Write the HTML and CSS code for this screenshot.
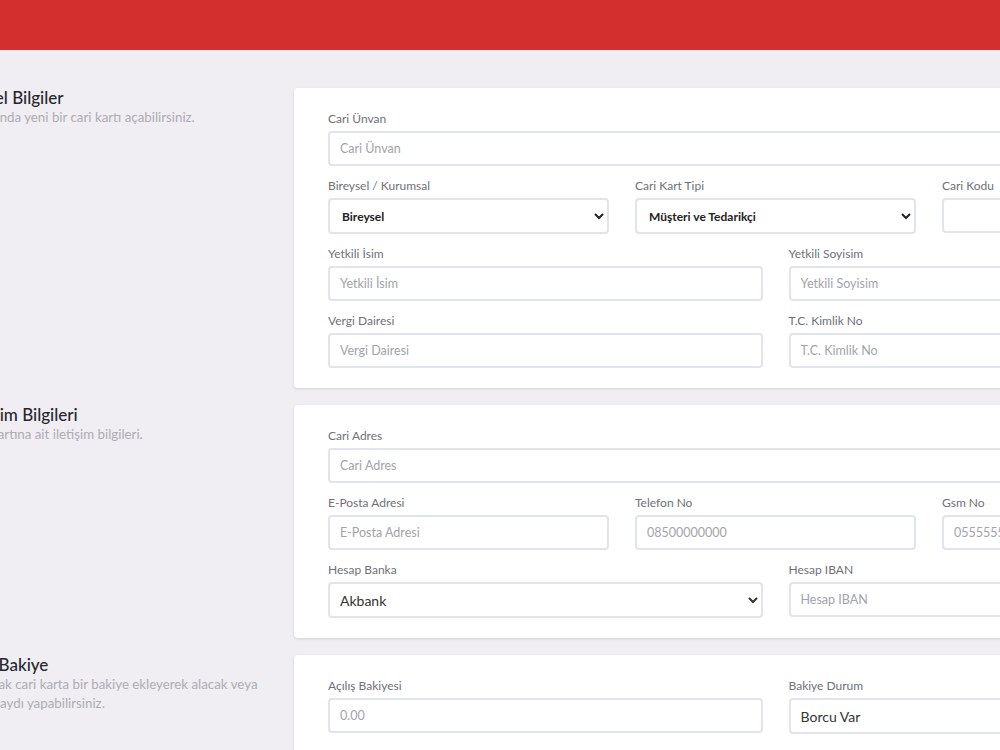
FILE: index.html
```html
<!DOCTYPE html>
<html lang="tr">
<head>
    <meta charset="UTF-8">
    <meta name="viewport" content="width=device-width, initial-scale=1.0">
    <title>Cari Kart Oluştur</title>
    <link rel="stylesheet" href="styles.css">
</head>
<body>
    <header class="topbar"></header>

    <main class="page">
        <section class="section">
            <div class="section-info">
                <h3>Genel Bilgiler</h3>
                <p>Bu alanda yeni bir cari kartı açabilirsiniz.</p>
            </div>
            <div class="card">
                <div class="row">
                    <div class="field">
                        <label>Cari Ünvan</label>
                        <input type="text" placeholder="Cari Ünvan">
                    </div>
                </div>
                <div class="row cols-3">
                    <div class="field">
                        <label>Bireysel / Kurumsal</label>
                        <select class="select-bold">
                            <option>Bireysel</option>
                            <option>Kurumsal</option>
                        </select>
                    </div>
                    <div class="field">
                        <label>Cari Kart Tipi</label>
                        <select class="select-bold">
                            <option>Müşteri ve Tedarikçi</option>
                            <option>Müşteri</option>
                            <option>Tedarikçi</option>
                        </select>
                    </div>
                    <div class="field">
                        <label>Cari Kodu</label>
                        <input type="text">
                    </div>
                </div>
                <div class="row cols-2">
                    <div class="field">
                        <label>Yetkili İsim</label>
                        <input type="text" placeholder="Yetkili İsim">
                    </div>
                    <div class="field">
                        <label>Yetkili Soyisim</label>
                        <input type="text" placeholder="Yetkili Soyisim">
                    </div>
                </div>
                <div class="row cols-2">
                    <div class="field">
                        <label>Vergi Dairesi</label>
                        <input type="text" placeholder="Vergi Dairesi">
                    </div>
                    <div class="field">
                        <label>T.C. Kimlik No</label>
                        <input type="text" placeholder="T.C. Kimlik No">
                    </div>
                </div>
            </div>
        </section>

        <section class="section">
            <div class="section-info">
                <h3>İletişim Bilgileri</h3>
                <p>Cari kartına ait iletişim bilgileri.</p>
            </div>
            <div class="card">
                <div class="row">
                    <div class="field">
                        <label>Cari Adres</label>
                        <input type="text" placeholder="Cari Adres">
                    </div>
                </div>
                <div class="row cols-3">
                    <div class="field">
                        <label>E-Posta Adresi</label>
                        <input type="email" placeholder="E-Posta Adresi">
                    </div>
                    <div class="field">
                        <label>Telefon No</label>
                        <input type="text" placeholder="08500000000">
                    </div>
                    <div class="field">
                        <label>Gsm No</label>
                        <input type="text" placeholder="05555555555">
                    </div>
                </div>
                <div class="row cols-2">
                    <div class="field">
                        <label>Hesap Banka</label>
                        <select class="select-plain">
                            <option>Akbank</option>
                            <option>Garanti BBVA</option>
                            <option>Ziraat Bankası</option>
                        </select>
                    </div>
                    <div class="field">
                        <label>Hesap IBAN</label>
                        <input type="text" placeholder="Hesap IBAN">
                    </div>
                </div>
            </div>
        </section>

        <section class="section">
            <div class="section-info">
                <h3>Cari Bakiye</h3>
                <p>Açılacak cari karta bir bakiye ekleyerek alacak veya borç kaydı yapabilirsiniz.</p>
            </div>
            <div class="card">
                <div class="row cols-2">
                    <div class="field">
                        <label>Açılış Bakiyesi</label>
                        <input type="text" placeholder="0.00">
                    </div>
                    <div class="field">
                        <label>Bakiye Durum</label>
                        <select class="select-plain">
                            <option>Borcu Var</option>
                            <option>Alacağı Var</option>
                        </select>
                    </div>
                </div>
            </div>
        </section>
    </main>
</body>
</html>
```

FILE: styles.css
```css
* { margin: 0; padding: 0; box-sizing: border-box; font-family: 'Lato', 'Noto Sans', sans-serif; }
body { background: #f0eef3; color: #2b2b33; overflow: hidden; }

.topbar {
    height: 50px;
    background: #d32f2f;
}

.page {
    width: 1300px;
    margin-left: -36px;
    padding-top: 38px;
}

.section {
    display: grid;
    grid-template-columns: 330px 963px;
    margin-bottom: 17px;
}

.section-info { padding-right: 30px; }

.section-info h3 {
    font-size: 17px;
    font-weight: 500;
    color: #26262e;
    line-height: 20px;
}

.section-info p {
    font-size: 13.3px;
    line-height: 19px;
    color: #aeacb3;
}

.card {
    background: #fff;
    border-radius: 4px;
    box-shadow: 0 1px 3px rgba(0, 0, 0, 0.13);
    padding: 23px 34px 20px;
    display: flex;
    flex-direction: column;
    gap: 12px;
}

.row { display: grid; gap: 26px; }
.row.cols-2 { grid-template-columns: 1fr 1fr; }
.row.cols-3 { grid-template-columns: 1fr 1fr 1fr; }

.field label {
    display: block;
    font-size: 12px;
    line-height: 15px;
    color: #707079;
    margin-bottom: 5px;
}

input, select {
    width: 100%;
    height: 35px;
    border: 2px solid #e2e4ed;
    border-radius: 4px;
    background: #fff;
    outline: none;
    font-size: 12.5px;
    color: #333;
    padding: 0 10px;
}

input::placeholder { color: #a3a3ab; }

.select-bold {
    height: 36px;
    font-size: 12px;
    font-weight: 700;
    color: #222;
    padding-left: 8px;
}

.select-plain {
    height: 36px;
    font-size: 14px;
    color: #333;
    padding-left: 6px;
}
```
